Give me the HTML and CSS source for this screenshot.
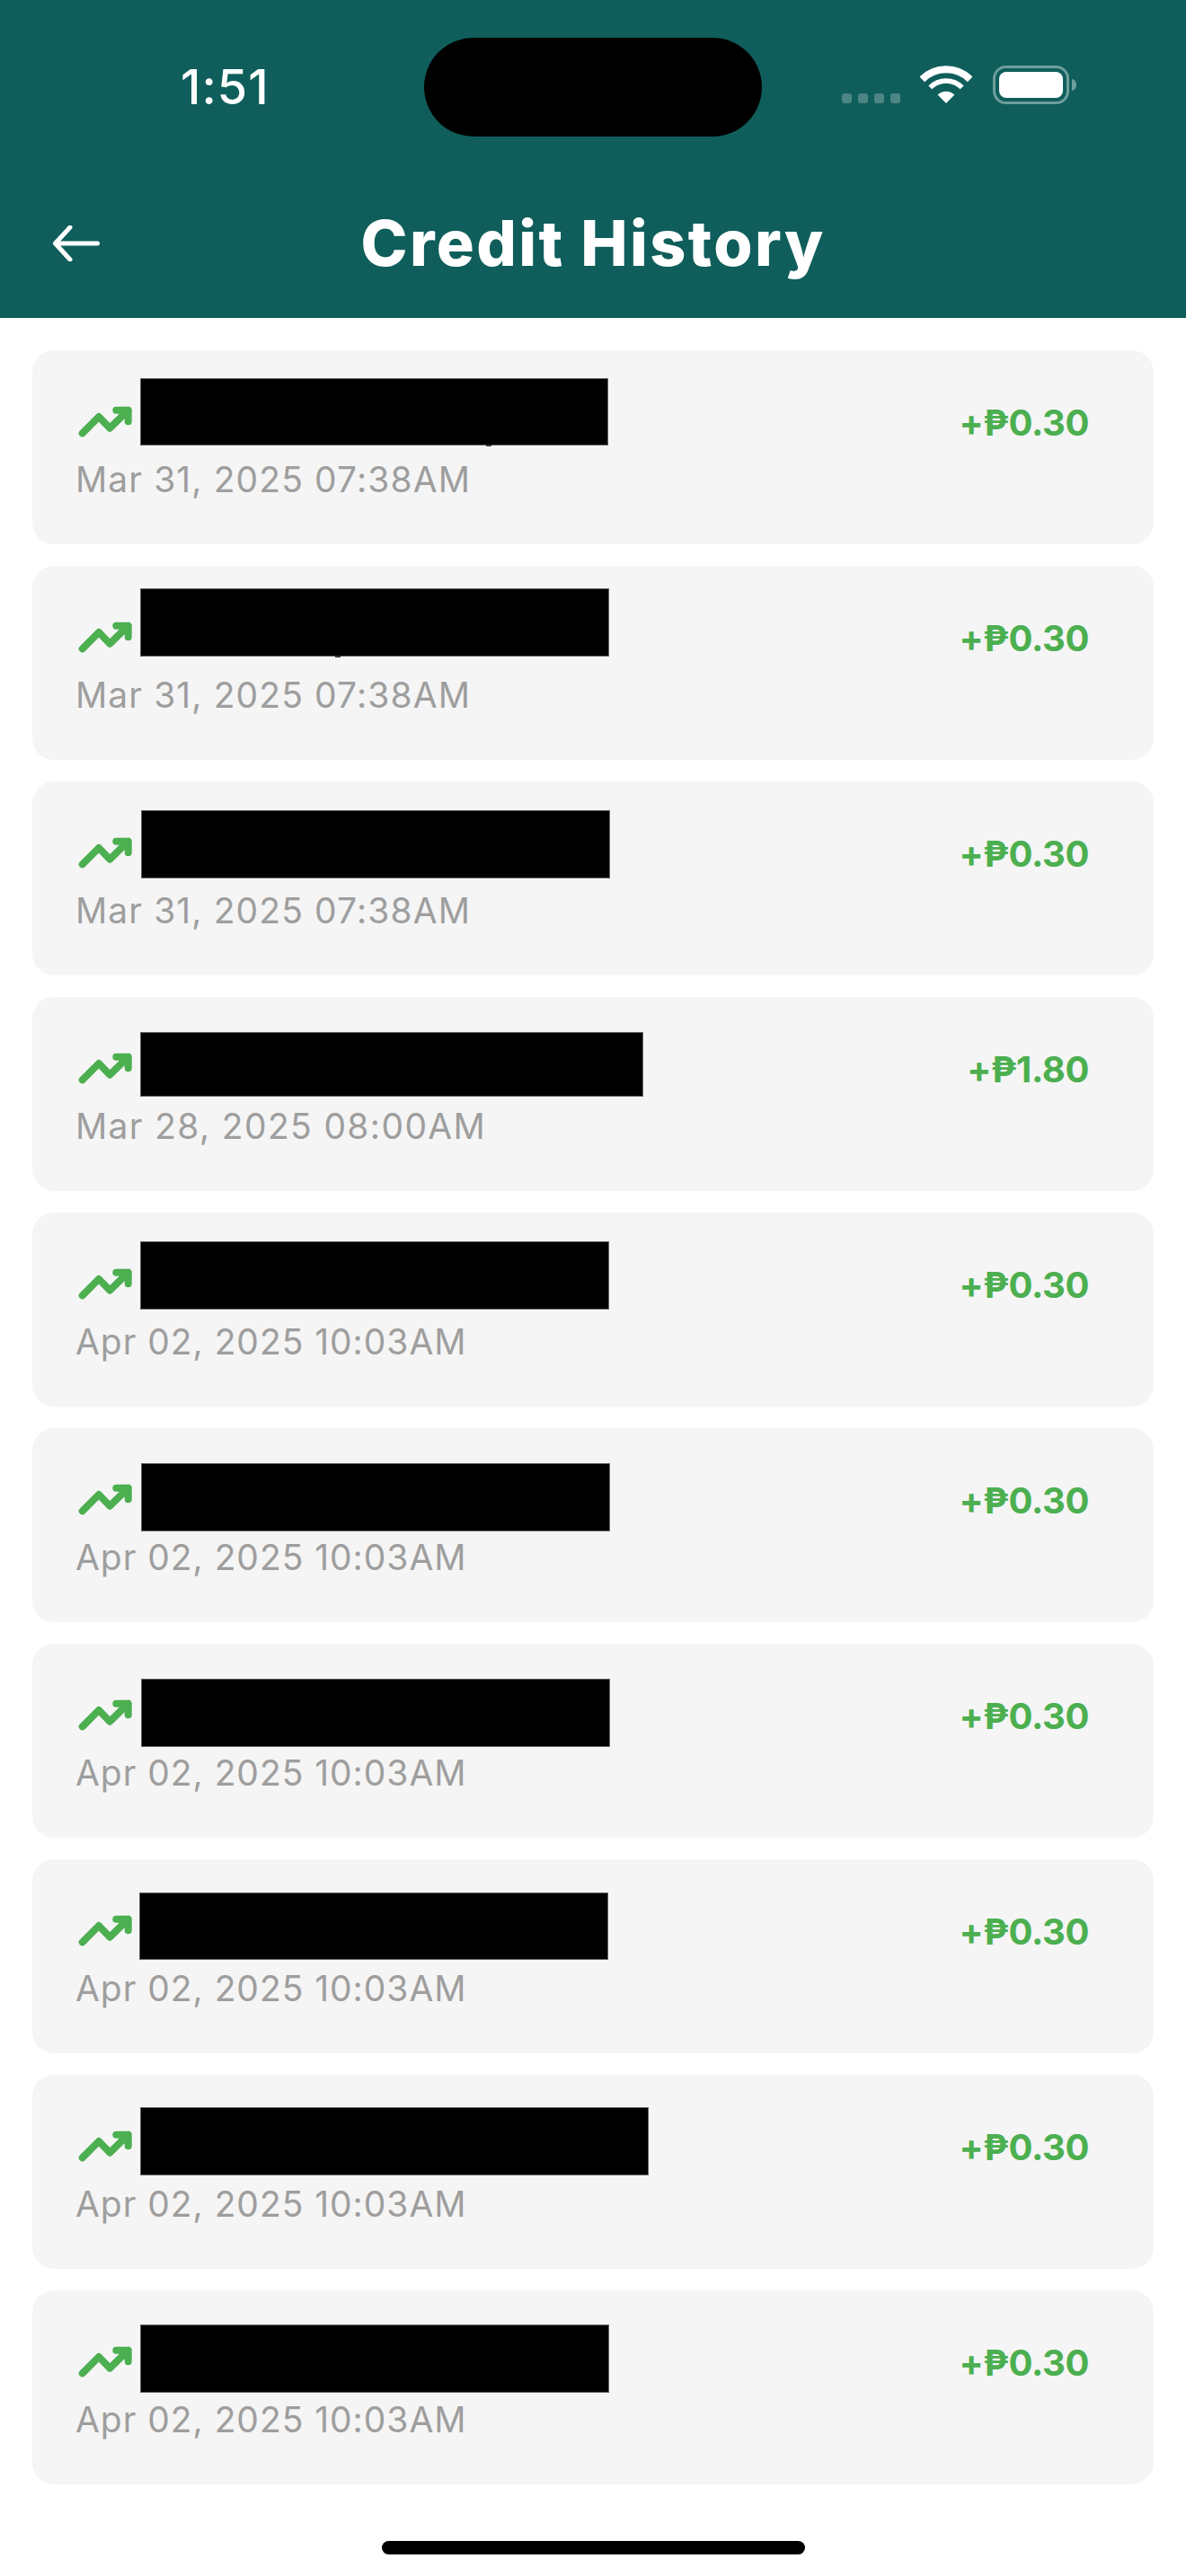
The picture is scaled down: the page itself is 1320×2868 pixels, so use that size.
FILE: index.html
```html
<!DOCTYPE html>
<html lang="en">
<head>
<meta charset="utf-8">
<title>Credit History</title>
<link rel="stylesheet" href="styles.css">
</head>
<body>
<header class="appbar">
  <div class="status">
    <div class="time">1:51</div>
    <div class="island"></div>
    <div class="indicators">
      <div class="signal"><i></i><i></i><i></i><i></i></div>
      <svg class="wifi" width="58" height="42" viewBox="0 0 58 42"><path class="arc arc-outer" d="M2.34 15.34A37.7 37.7 0 0 1 55.66 15.34"/><path class="arc arc-mid" d="M11.32 24.32A25 25 0 0 1 46.68 24.32"/><path class="wedge" d="M29 42L19.6 32.6A13.3 13.3 0 0 1 38.4 32.6Z"/></svg>
      <svg class="battery" width="93" height="43" viewBox="0 0 93 43"><rect class="bat-shell" x="1.5" y="1.5" width="82" height="40" rx="13"/><rect class="bat-fill" x="7" y="7" width="71" height="29" rx="8"/><path class="bat-nub" d="M88 15C91 15.5 93 18 93 21.5S91 27.5 88 28Z"/></svg>
    </div>
  </div>
  <nav class="nav">
    <svg class="back" width="54" height="40" viewBox="0 0 54 40"><path d="M3.5 20H50.5M20 2L3.5 20L20 38"/></svg>
    <h1 class="title">Credit History</h1>
  </nav>
</header>

<main class="list">
  <article class="card">
    <div class="info"><svg class="trend" width="64" height="40" viewBox="0 0 64 40"><path class="trend-line" d="M6.7 32.3L25 14L37.3 26.7L57.7 6.7M44.3 6.7H57.7V19.3"/></svg><p class="date">Mar 31, 2025 07:38AM</p></div>
    <div class="amount">+₱0.30</div>
    <div class="redact" style="left:120px;top:31px;width:521px;height:75px"><i class="tail" style="left:384px"></i></div>
  </article>
  <article class="card">
    <div class="info"><svg class="trend" width="64" height="40" viewBox="0 0 64 40"><path class="trend-line" d="M6.7 32.3L25 14L37.3 26.7L57.7 6.7M44.3 6.7H57.7V19.3"/></svg><p class="date">Mar 31, 2025 07:38AM</p></div>
    <div class="amount">+₱0.30</div>
    <div class="redact" style="left:120px;top:25px;width:522px;height:76px"><i class="tail" style="left:216px"></i></div>
  </article>
  <article class="card">
    <div class="info"><svg class="trend" width="64" height="40" viewBox="0 0 64 40"><path class="trend-line" d="M6.7 32.3L25 14L37.3 26.7L57.7 6.7M44.3 6.7H57.7V19.3"/></svg><p class="date">Mar 31, 2025 07:38AM</p></div>
    <div class="amount">+₱0.30</div>
    <div class="redact" style="left:121px;top:32px;width:522px;height:76px"></div>
  </article>
  <article class="card">
    <div class="info"><svg class="trend" width="64" height="40" viewBox="0 0 64 40"><path class="trend-line" d="M6.7 32.3L25 14L37.3 26.7L57.7 6.7M44.3 6.7H57.7V19.3"/></svg><p class="date date-wide">Mar 28, 2025 08:00AM</p></div>
    <div class="amount">+₱1.80</div>
    <div class="redact" style="left:120px;top:39px;width:560px;height:72px"></div>
  </article>
  <article class="card">
    <div class="info"><svg class="trend" width="64" height="40" viewBox="0 0 64 40"><path class="trend-line" d="M6.7 32.3L25 14L37.3 26.7L57.7 6.7M44.3 6.7H57.7V19.3"/></svg><p class="date date-tight">Apr 02, 2025 10:03AM</p></div>
    <div class="amount">+₱0.30</div>
    <div class="redact" style="left:120px;top:32px;width:522px;height:76px"></div>
  </article>
  <article class="card">
    <div class="info"><svg class="trend" width="64" height="40" viewBox="0 0 64 40"><path class="trend-line" d="M6.7 32.3L25 14L37.3 26.7L57.7 6.7M44.3 6.7H57.7V19.3"/></svg><p class="date date-tight">Apr 02, 2025 10:03AM</p></div>
    <div class="amount">+₱0.30</div>
    <div class="redact" style="left:121px;top:39px;width:522px;height:76px"></div>
  </article>
  <article class="card">
    <div class="info"><svg class="trend" width="64" height="40" viewBox="0 0 64 40"><path class="trend-line" d="M6.7 32.3L25 14L37.3 26.7L57.7 6.7M44.3 6.7H57.7V19.3"/></svg><p class="date date-tight">Apr 02, 2025 10:03AM</p></div>
    <div class="amount">+₱0.30</div>
    <div class="redact" style="left:121px;top:39px;width:522px;height:76px"></div>
  </article>
  <article class="card">
    <div class="info"><svg class="trend" width="64" height="40" viewBox="0 0 64 40"><path class="trend-line" d="M6.7 32.3L25 14L37.3 26.7L57.7 6.7M44.3 6.7H57.7V19.3"/></svg><p class="date date-tight">Apr 02, 2025 10:03AM</p></div>
    <div class="amount">+₱0.30</div>
    <div class="redact" style="left:119px;top:37px;width:522px;height:75px"></div>
  </article>
  <article class="card">
    <div class="info"><svg class="trend" width="64" height="40" viewBox="0 0 64 40"><path class="trend-line" d="M6.7 32.3L25 14L37.3 26.7L57.7 6.7M44.3 6.7H57.7V19.3"/></svg><p class="date date-tight">Apr 02, 2025 10:03AM</p></div>
    <div class="amount">+₱0.30</div>
    <div class="redact" style="left:120px;top:36px;width:566px;height:76px"></div>
  </article>
  <article class="card">
    <div class="info"><svg class="trend" width="64" height="40" viewBox="0 0 64 40"><path class="trend-line" d="M6.7 32.3L25 14L37.3 26.7L57.7 6.7M44.3 6.7H57.7V19.3"/></svg><p class="date date-tight">Apr 02, 2025 10:03AM</p></div>
    <div class="amount">+₱0.30</div>
    <div class="redact" style="left:120px;top:38px;width:522px;height:76px"></div>
  </article>
</main>

<div class="home-indicator"><span class="home-bar"></span></div>
</body>
</html>
```
FILE: styles.css
```css
* { box-sizing: border-box; }

html, body {
  margin: 0;
  padding: 0;
  background: #fff;
}

body {
  width: 1320px;
  height: 2868px;
  overflow: hidden;
  font-family: "Inter", "Liberation Sans", sans-serif;
}

.appbar {
  height: 354px;
  background: #0f5e5b;
  color: #fff;
}

.status {
  display: grid;
  grid-template-columns: 472px 376px 1fr;
  height: 152px;
  padding-top: 42px;
}

.time {
  padding: 29px 0 0 201px;
  font-size: 54px;
  font-weight: 500;
  line-height: 52px;
  letter-spacing: 1px;
}

.island {
  height: 110px;
  border-radius: 55px;
  background: #000;
}

.indicators {
  display: flex;
  align-items: flex-start;
  padding: 31px 0 0 89px;
}

.signal {
  display: flex;
  gap: 7px;
  margin-top: 31px;
}

.signal i {
  display: block;
  width: 11px;
  height: 11px;
  border-radius: 3px;
  background: rgba(255, 255, 255, .25);
}

.wifi {
  margin-left: 22px;
}

.arc {
  fill: none;
  stroke: #fff;
}

.arc-outer { stroke-width: 8; }
.arc-mid { stroke-width: 5.5; }
.wedge { fill: #fff; }

.battery {
  margin-left: 23px;
}

.bat-shell {
  fill: none;
  stroke: rgba(255, 255, 255, .4);
  stroke-width: 3;
}

.bat-fill { fill: #fff; }
.bat-nub { fill: rgba(255, 255, 255, .4); }

.nav {
  display: grid;
  grid-template-columns: 1fr auto 1fr;
  align-items: center;
  height: 202px;
  padding-top: 36px;
}

.back {
  margin-left: 58px;
  fill: none;
  stroke: #fff;
  stroke-width: 5;
  stroke-linecap: round;
  stroke-linejoin: round;
}

.title {
  margin: 0;
  font-size: 70px;
  font-weight: 800;
  line-height: 84px;
  letter-spacing: 2.4px;
  color: #fff;
}

.list {
  display: flex;
  flex-direction: column;
  gap: 24px;
  padding: 36px 36px 0;
}

.card {
  position: relative;
  display: flex;
  justify-content: space-between;
  height: 216px;
  padding: 60px 72px 0 48px;
  border-radius: 24px;
  background: #f5f5f5;
}

.trend {
  display: block;
  margin-left: 1px;
}

.trend-line {
  fill: none;
  stroke: #4caf50;
  stroke-width: 8;
  stroke-linecap: round;
  stroke-linejoin: round;
}

.date {
  margin: 16px 0 0;
  font-size: 39px;
  font-weight: 400;
  line-height: 56px;
  letter-spacing: 1.1px;
  color: #9e9e9e;
}

.date-tight { letter-spacing: .95px; }
.date-wide { letter-spacing: 1.35px; }

.amount {
  margin-top: -4px;
  font-size: 40px;
  font-weight: 700;
  line-height: 50px;
  letter-spacing: -.4px;
  color: #4caf50;
}

.redact {
  position: absolute;
  border: 1px solid #666;
  background: #000;
}

.tail {
  position: absolute;
  top: 100%;
  width: 6px;
  height: 2px;
  background: #333;
}

.home-indicator {
  display: flex;
  justify-content: center;
  padding-top: 63px;
}

.home-bar {
  width: 471px;
  height: 15px;
  border-radius: 8px;
  background: #000;
}
```
